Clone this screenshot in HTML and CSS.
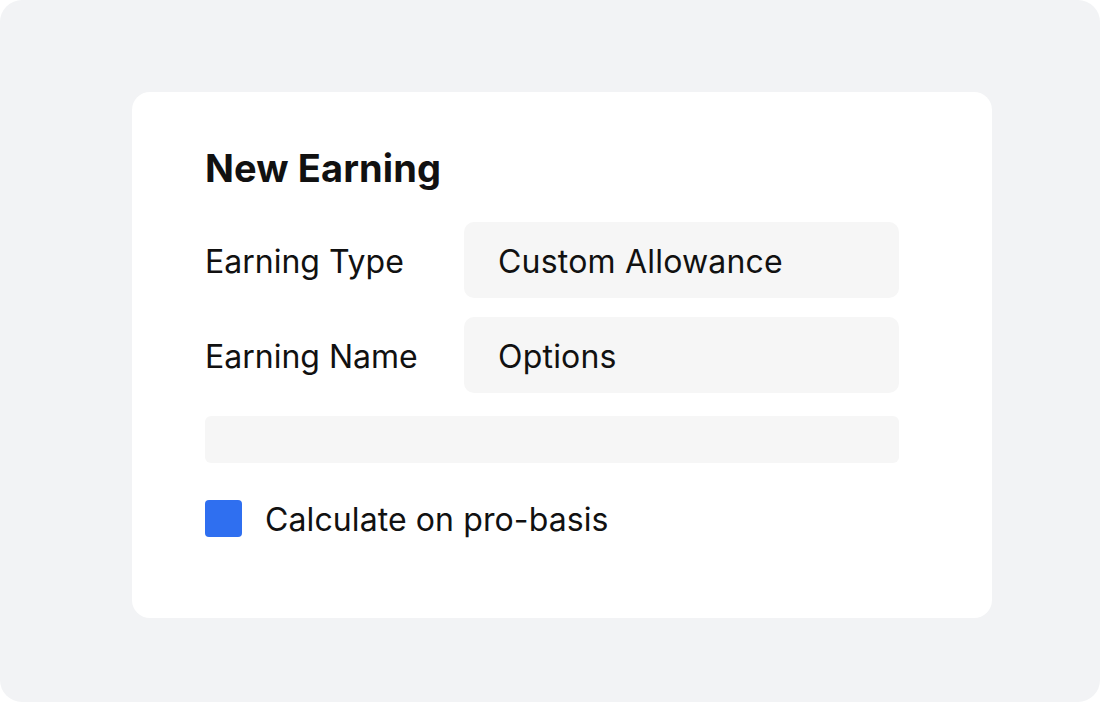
FILE: index.html
```html
<!DOCTYPE html>
<html>
<head>
<meta charset="utf-8">
<link rel="stylesheet" href="styles.css">
</head>
<body>
<div class="frame">
  <div class="card">
    <h1 class="title">New Earning</h1>
    <div class="row">
      <div class="label">Earning Type</div>
      <div class="field">Custom Allowance</div>
    </div>
    <div class="row row2">
      <div class="label">Earning Name</div>
      <div class="field">Options</div>
    </div>
    <div class="bar"></div>
    <div class="check-row">
      <span class="checkbox"></span>
      <span class="check-label">Calculate on pro-basis</span>
    </div>
  </div>
</div>
</body>
</html>
```
FILE: styles.css
```css
html, body {
  margin: 0;
  padding: 0;
  background: #ffffff;
}
body {
  width: 1100px;
  height: 702px;
  font-family: Inter, "Noto Sans", sans-serif;
  color: #111111;
}
.frame {
  width: 1100px;
  height: 702px;
  box-sizing: border-box;
  background: #f2f3f5;
  border-radius: 22px;
  padding: 92px 108px 0 132px;
}
.card {
  width: 860px;
  height: 526px;
  box-sizing: border-box;
  background: #ffffff;
  border-radius: 18px;
  padding: 52px 93px 0 73px;
}
.title {
  margin: 0 0 30px 0;
  font-size: 38px;
  font-weight: 700;
  line-height: 48px;
  letter-spacing: 0.1px;
}
.row {
  display: flex;
  align-items: center;
  height: 76px;
}
.row2 {
  margin-top: 19px;
}
.label {
  width: 259px;
  font-size: 32px;
  font-weight: 400;
  padding-top: 2px;
}
.field {
  flex: 1;
  height: 76px;
  box-sizing: border-box;
  background: #f6f6f6;
  border-radius: 10px;
  padding-left: 34px;
  padding-top: 2px;
  display: flex;
  align-items: center;
  font-size: 32px;
  letter-spacing: 0.2px;
}
.bar {
  margin-top: 23px;
  height: 47px;
  background: #f6f6f6;
  border-radius: 6px;
}
.check-row {
  margin-top: 35px;
  display: flex;
  align-items: center;
}
.checkbox {
  width: 37px;
  height: 37px;
  background: #2f6ff0;
  border-radius: 4px;
  margin-right: 23px;
}
.check-label {
  font-size: 32px;
  padding-top: 2px;
  letter-spacing: 0.1px;
}
```
